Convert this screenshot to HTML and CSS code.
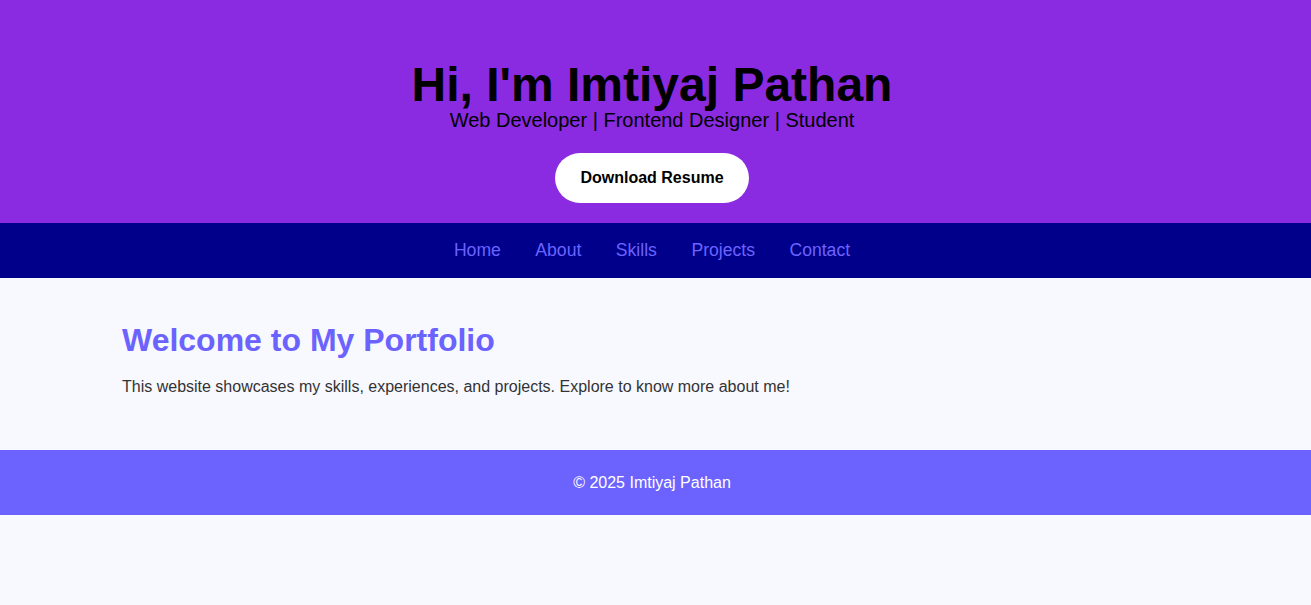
FILE: index.html
```html
<!DOCTYPE html>
<html lang="en">
<head>
<meta charset="utf-8">
<title>Imtiyaj Pathan | Portfolio</title>
<link rel="stylesheet" href="styles.css">
</head>
<body>
<header class="hero">
  <h1 class="hero-title">Hi, I'm Imtiyaj Pathan</h1>
  <p class="hero-tagline">Web Developer | Frontend Designer | Student</p>
  <a class="hero-btn" href="#">Download Resume</a>
</header>
<nav class="nav">
  <a class="nav-link" href="#">Home</a>
  <a class="nav-link" href="#">About</a>
  <a class="nav-link" href="#">Skills</a>
  <a class="nav-link" href="#">Projects</a>
  <a class="nav-link" href="#">Contact</a>
</nav>
<main class="main">
  <section class="intro">
    <h2 class="intro-title">Welcome to My Portfolio</h2>
    <p class="intro-text">This website showcases my skills, experiences, and projects. Explore to know more about me!</p>
  </section>
</main>
<footer class="footer">
  <p class="footer-text">&copy; 2025 Imtiyaj Pathan</p>
</footer>
</body>
</html>
```
FILE: styles.css
```css
html, body {
  margin: 0;
  padding: 0;
}
body {
  background: #f8f9ff;
  font-family: "Liberation Sans", Arial, sans-serif;
  color: #333;
}
.hero {
  background: #8a2be2;
  color: #000;
  display: flex;
  flex-direction: column;
  align-items: center;
  text-align: center;
  padding: 63px 27px 20px 20px;
}
.hero-title {
  margin: 0;
  font-size: 48px;
  line-height: 44px;
  font-weight: bold;
}
.hero-tagline {
  margin: 2px 0 0;
  font-size: 20px;
  line-height: 23px;
}
.hero-btn {
  margin-top: 21px;
  display: inline-block;
  background: #fff;
  color: #000;
  text-decoration: none;
  font-weight: bold;
  font-size: 16px;
  line-height: 18px;
  padding: 16px 25px;
  border-radius: 25px;
}
.nav {
  background: #00008b;
  height: 55px;
  display: flex;
  justify-content: center;
  align-items: center;
  gap: 34.5px;
  padding: 0 7px 0 0;
}
.nav-link {
  color: #6c63ff;
  text-decoration: none;
  font-size: 17.6px;
}
.main {
  padding: 44px 0 54px;
}
.intro {
  margin: 0 0 0 122px;
}
.intro-title {
  margin: 0 0 19px;
  font-size: 32px;
  color: #6c63ff;
  font-weight: bold;
}
.intro-text {
  margin: 0;
  font-size: 16px;
  color: #333;
}
.footer {
  background: #6c63ff;
  height: 65px;
  display: flex;
  justify-content: center;
  align-items: center;
  padding: 0 7px 0 0;
}
.footer-text {
  margin: 0;
  color: #fff;
  font-size: 16px;
}
```
